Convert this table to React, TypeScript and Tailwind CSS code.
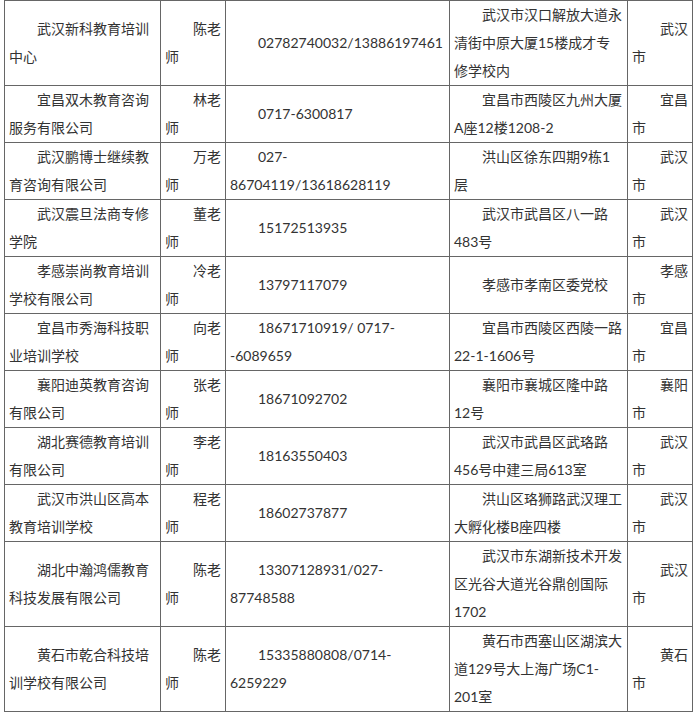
const ROWS: [string, string, string, string, string][] = [
    ['武汉新科教育培训中心', '陈老师', '02782740032/13886197461', '武汉市汉口解放大道永清街中原大厦15楼成才专修学校内', '武汉市'],
    ['宜昌双木教育咨询服务有限公司', '林老师', '0717-6300817', '宜昌市西陵区九州大厦A座12楼1208-2', '宜昌市'],
    ['武汉鹏博士继续教育咨询有限公司', '万老师', '027-86704119/13618628119', '洪山区徐东四期9栋1层', '武汉市'],
    ['武汉震旦法商专修学院', '董老师', '15172513935', '武汉市武昌区八一路483号', '武汉市'],
    ['孝感崇尚教育培训学校有限公司', '冷老师', '13797117079', '孝感市孝南区委党校', '孝感市'],
    ['宜昌市秀海科技职业培训学校', '向老师', '18671710919/ 0717--6089659', '宜昌市西陵区西陵一路22-1-1606号', '宜昌市'],
    ['襄阳迪英教育咨询有限公司', '张老师', '18671092702', '襄阳市襄城区隆中路12号', '襄阳市'],
    ['湖北赛德教育培训有限公司', '李老师', '18163550403', '武汉市武昌区武珞路456号中建三局613室', '武汉市'],
    ['武汉市洪山区高本教育培训学校', '程老师', '18602737877', '洪山区珞狮路武汉理工大孵化楼B座四楼', '武汉市'],
    ['湖北中瀚鸿儒教育科技发展有限公司', '陈老师', '13307128931/027-87748588', '武汉市东湖新技术开发区光谷大道光谷鼎创国际1702', '武汉市'],
    ['黄石市乾合科技培训学校有限公司', '陈老师', '15335880808/0714-6259229', '黄石市西塞山区湖滨大道129号大上海广场C1-201室', '黄石市'],
]

const CELL = 'border border-[#666] px-1 py-0 align-middle indent-[28px]'

export default function App() {
    return (
        <div className="bg-white pl-1 text-[14px] leading-[28px] text-[#333] font-['Lato','Noto_Sans_CJK_SC',sans-serif]">
            <table className="table-fixed border-collapse w-[689px]">
                <colgroup>
                    <col className="w-[156px]" />
                    <col className="w-[65px]" />
                    <col className="w-[224px]" />
                    <col className="w-[178px]" />
                    <col className="w-[65px]" />
                </colgroup>
                <tbody>
                    {ROWS.map((row, i) => (
                        <tr key={i}>
                            {row.map((cell, j) => (
                                <td key={j} className={CELL}>{cell}</td>
                            ))}
                        </tr>
                    ))}
                </tbody>
            </table>
        </div>
    )
}
